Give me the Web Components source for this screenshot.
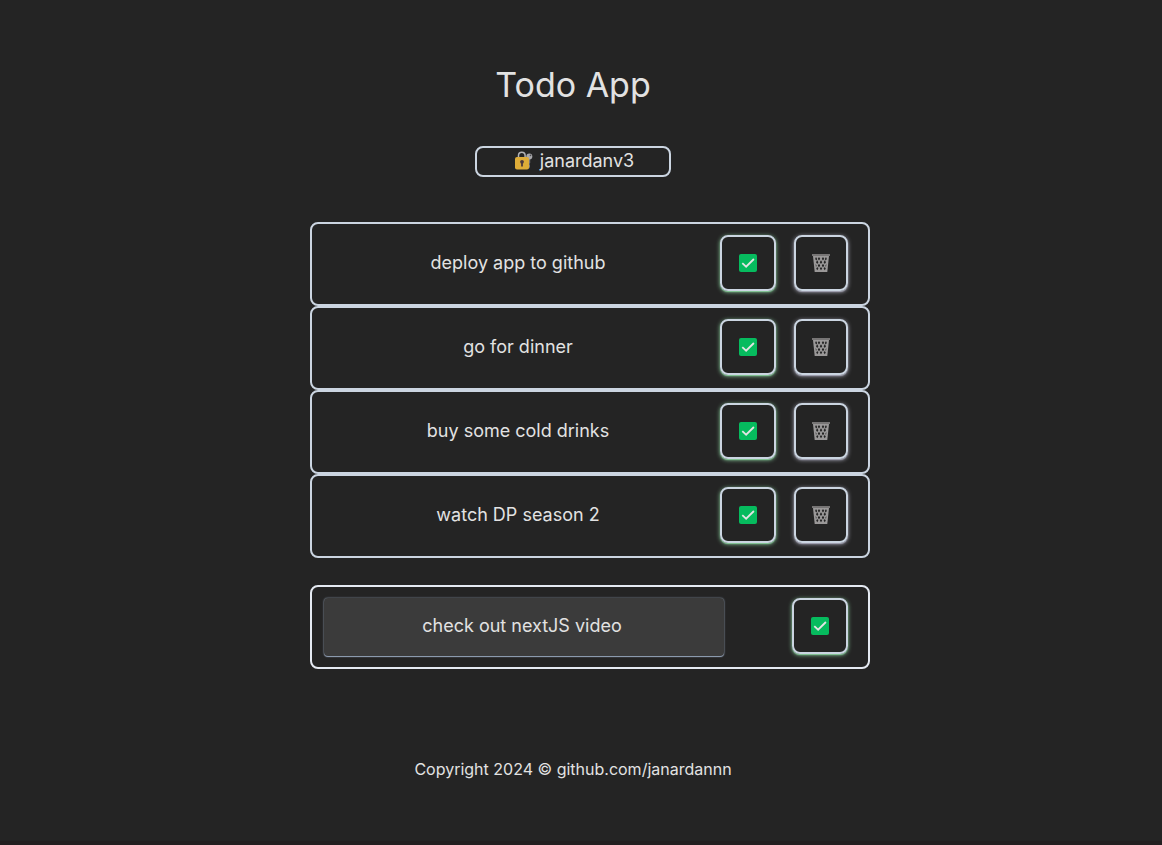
<!DOCTYPE html>
<html lang="en">
<head>
<meta charset="utf-8">
<title>Todo App</title>
<style>
  html { background: #242424; }
  body { margin: 0; font-family: Inter, "Liberation Sans", sans-serif; font-size: 18px; line-height: 28px; color: #e2e2e2; }
</style>
</head>
<body>
<todo-app>
  <user-badge slot="user">janardanv3</user-badge>
  <todo-item>deploy app to github</todo-item>
  <todo-item>go for dinner</todo-item>
  <todo-item>buy some cold drinks</todo-item>
  <todo-item>watch DP season 2</todo-item>
  <todo-form slot="form"></todo-form>
</todo-app>

<template id="app-tpl">
  <style>
    :host { display: flex; flex-direction: column; box-sizing: border-box; min-height: 100vh; border-bottom: 4px solid #231f20; padding-top: 64px; padding-left: 18px; }
    main, footer { width: 100%; max-width: 560px; margin: 0 auto; }
    header { display: flex; flex-direction: column; align-items: center; gap: 40px; padding-right: 34px; }
    h1 { margin: 0; font-size: 34px; line-height: 42px; font-weight: 400; }
    .list { margin-top: 45px; }
    .form { margin-top: 27px; }
    footer { box-sizing: border-box; margin-top: 88px; padding-right: 34px; text-align: center; font-size: 16px; line-height: 24px; }
  </style>
  <main>
    <header><h1>Todo App</h1><slot name="user"></slot></header>
    <div class="list" role="list"><slot></slot></div>
    <div class="form"><slot name="form"></slot></div>
  </main>
  <footer>Copyright 2024 © github.com/janardannn</footer>
</template>

<template id="badge-tpl">
  <style>
    :host { display: block; width: 196px; }
    button { display: flex; align-items: center; justify-content: center; gap: 7px; box-sizing: border-box; width: 100%; height: 31px; padding: 0 0 2px 2px; border: 2px solid #cbd5e1; border-radius: 8px; background: none; color: inherit; font: inherit; }
    svg { display: block; }
  </style>
  <button type="button">
    <svg width="19" height="20" viewBox="0 0 19 20" aria-hidden="true">
      <path d="M4.500 8V4.500a3.300 3.300 0 0 1 6.600 0V8" fill="none" stroke="#b2b2b5" stroke-width="1.500"/>
      <path d="M13.500 7l-.5 10 2 .5 1-1.500v-2l-.6-1 .8-1V7z" fill="#77777b"/>
      <circle cx="15.300" cy="5.500" r="3" fill="#a8a8ac"/>
      <circle cx="16.500" cy="4.400" r=".8" fill="#4b4b4e"/>
      <rect x="1" y="6" width="14" height="12.500" rx="2" fill="#deac38"/>
      <circle cx="8" cy="10.800" r="1.900" fill="#4c393d"/>
      <path d="M7.100 11h1.800v4.500H7.100z" fill="#4c393d"/>
    </svg>
    <slot></slot>
  </button>
</template>

<template id="button-tpl">
  <style>
    :host { display: block; flex: none; width: 56px; --glow: #86c798; }
    :host([kind="delete"]) { width: 54px; --glow: #a4a4b4; }
    button { display: grid; place-items: center; box-sizing: border-box; width: 100%; height: 56px; padding: 0 0 1px; border: 2px solid #cbd5e1; border-radius: 8px; background: none; box-shadow: 0 1px 4px 0 var(--glow), 0 1px 1px 0 var(--glow); }
    svg { display: none; }
    :host(:not([kind="delete"])) .check, :host([kind="delete"]) .bin { display: block; }
  </style>
  <button type="button">
    <svg class="check" width="18" height="18" viewBox="0 0 18 18" aria-hidden="true">
      <rect width="18" height="18" rx="2" fill="#06bb5e"/>
      <path d="M3.300 9.200l3.800 3.500 7.800-7.700" fill="none" stroke="#e4e4e4" stroke-width="1.800"/>
    </svg>
    <svg class="bin" width="18" height="18" viewBox="0 0 18 18" aria-hidden="true">
      <path d="M1 2h16l-1.700 16H2.700z" fill="#9a9898"/>
      <g fill="#242424">
        <path d="M4 3l1.200 2L4.400 6.500 3.100 5zM7 3l1.200 1.800L7 6.500 5.800 4.800zM11 3l1.200 1.800L11 6.500 9.800 4.800zM14 3l.9 2-1.300 1.500-.8-1.500z"/>
        <path d="M5.200 6.300l1.200 1.900-1.200 1.900L4 8.200zM9 6.300l1.200 1.900L9 10.100 7.800 8.200zM12.800 6.300L14 8.200l-1.200 1.900-1.200-1.900z"/>
        <path d="M7 9.700l1.200 1.900L7 13.500l-1.200-1.900zM11 9.700l1.200 1.900-1.200 1.900-1.200-1.900zM3.600 10l1 1.700-.6 1.400zM14.400 10l-1 1.700.6 1.400z"/>
        <path d="M5.200 13l1.200 1.600-1.200 1.600L4.200 14.600zM9 13l1.200 1.600L9 16.200l-1.200-1.600zM12.800 13l1 1.600-1 1.600-1.200-1.600z"/>
      </g>
      <path d="M0 0h18v2H0z" fill="#777575"/>
    </svg>
  </button>
</template>

<template id="item-tpl">
  <style>
    :host { display: flex; align-items: flex-start; gap: 18px; box-sizing: border-box; height: 84px; padding: 11px 20px 0 0; border: 2px solid #cbd5e1; border-radius: 8px; }
    .text { flex: 1; padding: 14px 0 0 22px; text-align: center; }
  </style>
  <div class="text"><slot></slot></div>
  <icon-button label="Mark as done"></icon-button>
  <icon-button kind="delete" label="Delete"></icon-button>
</template>

<template id="form-tpl">
  <style>
    :host { display: block; }
    form { display: flex; align-items: flex-start; justify-content: space-between; box-sizing: border-box; height: 84px; padding: 11px 20px 0 12px; border: 2px solid #e5eaf2; border-radius: 8px; }
    input { box-sizing: border-box; flex: 0 1 400px; min-width: 0; height: 58px; padding: 0 4px 4px 0; border: 0; border-radius: 4px; outline: 0; background: #3b3b3b; color: inherit; font: inherit; text-align: center; box-shadow: 0 1px 1px 0 #94a3b8, 0 0 2px 0 #94a3b8; }
  </style>
  <form>
    <input type="text" aria-label="New todo" value="check out nextJS video">
    <icon-button label="Add todo"></icon-button>
  </form>
</template>

<script>
  class TemplateElement extends HTMLElement {
    constructor() {
      super();
      this.attachShadow({ mode: "open" }).append(
        document.getElementById(this.constructor.template).content.cloneNode(true));
    }
  }
  class IconButton extends TemplateElement {
    static template = "button-tpl";
    connectedCallback() {
      this.shadowRoot.querySelector("button").setAttribute("aria-label", this.getAttribute("label"));
    }
  }
  class UserBadge extends TemplateElement { static template = "badge-tpl"; }
  class TodoItem extends TemplateElement {
    static template = "item-tpl";
    connectedCallback() {
      this.setAttribute("role", "listitem");
      this.shadowRoot.querySelector("[kind=delete]").addEventListener("click", () => this.remove());
    }
  }
  class TodoForm extends TemplateElement {
    static template = "form-tpl";
    connectedCallback() {
      const form = this.shadowRoot.querySelector("form");
      const input = form.querySelector("input");
      const add = () => {
        if (!input.value.trim()) return;
        const item = document.createElement("todo-item");
        item.textContent = input.value.trim();
        this.before(item);
        input.value = "";
      };
      form.addEventListener("submit", (event) => { event.preventDefault(); add(); });
      form.querySelector("icon-button").addEventListener("click", add);
    }
  }
  class TodoApp extends TemplateElement { static template = "app-tpl"; }
  customElements.define("icon-button", IconButton);
  customElements.define("user-badge", UserBadge);
  customElements.define("todo-item", TodoItem);
  customElements.define("todo-form", TodoForm);
  customElements.define("todo-app", TodoApp);
</script>
</body>
</html>
